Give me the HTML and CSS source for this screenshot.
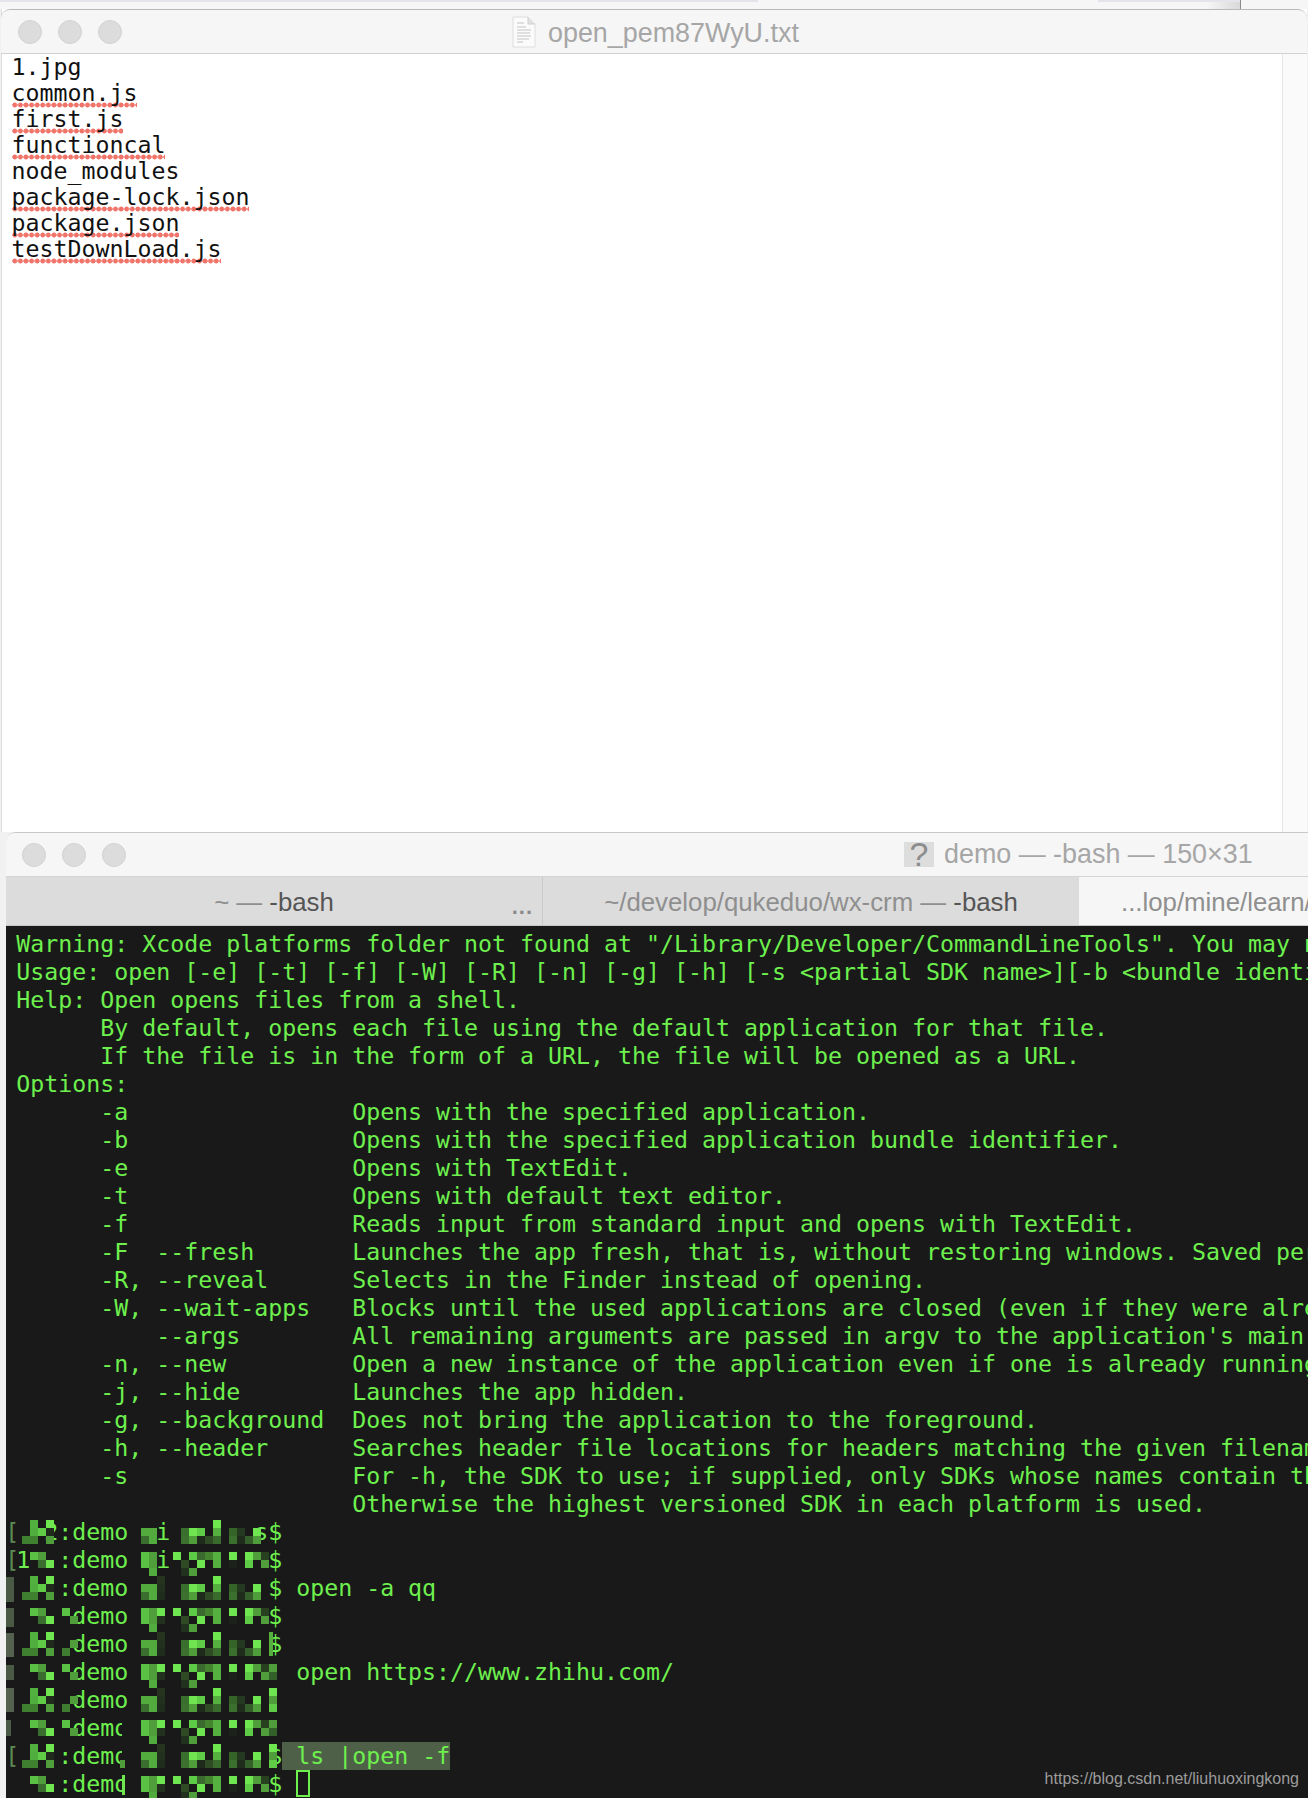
FILE: index.html
```html
<!DOCTYPE html>
<html lang="en">
<head>
<meta charset="utf-8">
<title>open -f</title>
<link rel="stylesheet" href="styles.css">
</head>
<body>
<div class="desktop">
  <div class="backstrip">
    <div class="back-tab-a"></div>
    <div class="back-gap"></div>
    <div class="back-tab-b"></div>
    <div class="back-rest"></div>
  </div>

  <section class="editor">
    <header class="titlebar editor-bar">
      <div class="lights"><i></i><i></i><i></i></div>
      <div class="title">
        <svg class="doc-icon" viewBox="0 0 24 32" width="24" height="32" aria-hidden="true">
          <path d="M1 1h15l7 7v23H1z" fill="#fbfbfb" stroke="#dedede"/>
          <path d="M16 1v7h7" fill="#e2e2e2" stroke="#cfcfcf"/>
          <path d="M5 7h7M5 11h9M5 14h14M5 17h13M5 20h14M5 23h12M5 26h6" stroke="#c4c4c4" stroke-width="1"/>
        </svg>
        <span class="title-text">open_pem87WyU.txt</span>
      </div>
    </header>
    <div class="editor-body">
<pre class="doc">1.jpg
<span class="err">common.js</span>
<span class="err">first.js</span>
<span class="err">functioncal</span>
node_modules
<span class="err">package-lock.json</span>
<span class="err">package.json</span>
<span class="err">testDownLoad.js</span></pre>
      <div class="scroll-gutter"></div>
    </div>
  </section>

  <section class="terminal">
    <header class="titlebar term-bar">
      <div class="lights"><i></i><i></i><i></i></div>
      <div class="title term-title">
        <span class="q-icon">?</span>
        <span>demo — -bash — 150×31</span>
      </div>
    </header>
    <nav class="tabs">
      <div class="tab tab-one"><span class="dim">~ — </span><span class="proc">-bash</span><span class="tab-more">...</span></div>
      <div class="tab tab-two"><span class="dim">~/develop/qukeduo/wx-crm — </span><span class="proc">-bash</span></div>
      <div class="tab tab-active"><span class="dim">...lop/mine/learn/</span></div>
    </nav>
    <div class="term-body">
<pre class="term-text">Warning: Xcode platforms folder not found at "/Library/Developer/CommandLineTools". You may n
Usage: open [-e] [-t] [-f] [-W] [-R] [-n] [-g] [-h] [-s &lt;partial SDK name&gt;][-b &lt;bundle identi
Help: Open opens files from a shell.
      By default, opens each file using the default application for that file.
      If the file is in the form of a URL, the file will be opened as a URL.
Options:
      -a                Opens with the specified application.
      -b                Opens with the specified application bundle identifier.
      -e                Opens with TextEdit.
      -t                Opens with default text editor.
      -f                Reads input from standard input and opens with TextEdit.
      -F  --fresh       Launches the app fresh, that is, without restoring windows. Saved per
      -R, --reveal      Selects in the Finder instead of opening.
      -W, --wait-apps   Blocks until the used applications are closed (even if they were alre
          --args        All remaining arguments are passed in argv to the application's main(
      -n, --new         Open a new instance of the application even if one is already running
      -j, --hide        Launches the app hidden.
      -g, --background  Does not bring the application to the foreground.
      -h, --header      Searches header file locations for headers matching the given filenam
      -s                For -h, the SDK to use; if supplied, only SDKs whose names contain th
                        Otherwise the highest versioned SDK in each platform is used.
<span class="brk">[</span>  2:demo  i      s$
<span class="brk">[</span>1  :demo  i       $
   :demo          $ open -a qq
    demo          $
    demo          $
    demo            open https://www.zhihu.com/
    demo
    demo
<span class="brk">[</span>   :demo          $<span class="sel"> ls |open -f</span>
   :demo          $ <span class="cursor"></span></pre>

      <svg class="mosaic" viewBox="6 1516 300 282" width="300" height="282" aria-hidden="true">
        <defs>
          <g id="aL">
            <rect x="30" y="0" width="8" height="8" fill="#52b03f"/><rect x="46" y="0" width="8" height="8" fill="#6fe650"/>
            <rect x="30" y="8" width="8" height="8" fill="#4fae3d"/><rect x="38" y="8" width="8" height="8" fill="#5fcb47"/><rect x="46" y="8" width="8" height="8" fill="#1f2a1c"/>
            <rect x="22" y="16" width="8" height="8" fill="#3f8030"/><rect x="30" y="16" width="8" height="8" fill="#3f8030"/><rect x="46" y="16" width="8" height="8" fill="#4f9d3b"/>
          </g>
          <g id="aX">
            <rect x="70" y="8" width="8" height="8" fill="#4f9d3b"/><rect x="62" y="16" width="8" height="8" fill="#3e7d30"/>
          </g>
          <g id="aM">
            <rect x="141" y="8" width="8" height="8" fill="#53ab3e"/><rect x="149" y="8" width="8" height="8" fill="#53ab3e"/>
            <rect x="141" y="16" width="8" height="8" fill="#3a6e2e"/><rect x="149" y="16" width="8" height="8" fill="#52ab3e"/>
          </g>
          <g id="aD">
            <rect x="157" y="0" width="8" height="8" fill="#26331f"/><rect x="157" y="8" width="8" height="8" fill="#22301e"/><rect x="157" y="16" width="8" height="8" fill="#1f2e1c"/>
          </g>
          <g id="aR">
            <rect x="213" y="0" width="8" height="8" fill="#6fe84f"/>
            <rect x="181" y="8" width="8" height="8" fill="#3a6e2e"/><rect x="189" y="8" width="8" height="8" fill="#6fe650"/><rect x="197" y="8" width="8" height="8" fill="#5ecc47"/><rect x="213" y="8" width="8" height="8" fill="#55b040"/>
            <rect x="229" y="8" width="8" height="8" fill="#356428"/><rect x="237" y="8" width="8" height="8" fill="#24391f"/><rect x="253" y="8" width="8" height="8" fill="#6fe650"/>
            <rect x="181" y="16" width="8" height="8" fill="#3b702f"/><rect x="189" y="16" width="8" height="8" fill="#4f9d3b"/><rect x="197" y="16" width="8" height="8" fill="#1e2a1b"/><rect x="205" y="16" width="8" height="8" fill="#2e4b25"/><rect x="213" y="16" width="8" height="8" fill="#396b2d"/>
            <rect x="229" y="16" width="8" height="8" fill="#3a6f2e"/><rect x="237" y="16" width="8" height="8" fill="#1f2c1c"/><rect x="245" y="16" width="8" height="8" fill="#355f2a"/><rect x="253" y="16" width="8" height="8" fill="#4f9d3b"/>
          </g>
          <g id="aE">
            <rect x="269" y="0" width="8" height="8" fill="#6fe650"/><rect x="269" y="8" width="8" height="8" fill="#4f9d3b"/><rect x="269" y="16" width="8" height="8" fill="#5fcb47"/>
          </g>
          <g id="bL">
            <rect x="30" y="0" width="8" height="8" fill="#5ac145"/><rect x="38" y="0" width="8" height="8" fill="#4f9d3b"/>
            <rect x="38" y="8" width="8" height="8" fill="#3a6e2e"/><rect x="46" y="8" width="8" height="8" fill="#6fe650"/>
          </g>
          <g id="bX">
            <rect x="62" y="0" width="8" height="8" fill="#5ac145"/><rect x="70" y="8" width="8" height="8" fill="#4f9d3b"/>
          </g>
          <g id="bM">
            <rect x="141" y="0" width="8" height="8" fill="#5ac145"/><rect x="149" y="0" width="8" height="8" fill="#4f9d3b"/>
            <rect x="141" y="8" width="8" height="8" fill="#5ac145"/><rect x="149" y="8" width="8" height="8" fill="#4f9d3b"/>
            <rect x="149" y="16" width="8" height="8" fill="#52ab3e"/>
          </g>
          <g id="bD">
            <rect x="157" y="0" width="8" height="8" fill="#6fe650"/><rect x="157" y="8" width="8" height="8" fill="#22301e"/>
          </g>
          <g id="bR">
            <rect x="173" y="0" width="8" height="8" fill="#6fe650"/><rect x="189" y="0" width="8" height="8" fill="#5ecb46"/><rect x="197" y="0" width="8" height="8" fill="#3a6a2d"/><rect x="205" y="0" width="8" height="8" fill="#44842f"/><rect x="213" y="0" width="8" height="8" fill="#55b040"/>
            <rect x="229" y="0" width="8" height="8" fill="#6fe650"/><rect x="245" y="0" width="8" height="8" fill="#6fe650"/><rect x="253" y="0" width="8" height="8" fill="#4f9d3b"/><rect x="261" y="0" width="8" height="8" fill="#27401f"/>
            <rect x="181" y="8" width="8" height="8" fill="#2e4b25"/><rect x="197" y="8" width="8" height="8" fill="#6fe650"/><rect x="213" y="8" width="8" height="8" fill="#55b040"/>
            <rect x="229" y="8" width="8" height="8" fill="#1b221a"/><rect x="245" y="8" width="8" height="8" fill="#5ecb46"/><rect x="261" y="8" width="8" height="8" fill="#4f9d3b"/>
            <rect x="181" y="16" width="8" height="8" fill="#22301e"/><rect x="189" y="16" width="8" height="8" fill="#4f9d3b"/>
          </g>
          <g id="bE">
            <rect x="269" y="0" width="8" height="8" fill="#4f9d3b"/><rect x="269" y="8" width="8" height="8" fill="#326028"/>
          </g>
        </defs>

        <!-- prompt rows: odd rows carry pattern A, even rows pattern B -->
        <g transform="translate(0 1520)"><use href="#aL"/><use href="#aM"/><use href="#aR"/></g>
        <g transform="translate(0 1552)"><use href="#bL"/><use href="#bM"/><use href="#bR"/></g>
        <g transform="translate(0 1576)"><use href="#aL"/><use href="#aM"/><use href="#aD"/><use href="#aR"/></g>
        <g transform="translate(0 1608)"><use href="#bL"/><use href="#bX"/><use href="#bM"/><use href="#bD"/><use href="#bR"/></g>
        <g transform="translate(0 1632)"><use href="#aL"/><use href="#aX"/><use href="#aM"/><use href="#aD"/><use href="#aR"/></g>
        <g transform="translate(0 1664)"><use href="#bL"/><use href="#bX"/><use href="#bM"/><use href="#bD"/><use href="#bR"/><use href="#bE"/></g>
        <g transform="translate(0 1688)"><use href="#aL"/><use href="#aX"/><use href="#aM"/><use href="#aD"/><use href="#aR"/><use href="#aE"/></g>
        <g transform="translate(0 1720)"><use href="#bL"/><use href="#bX"/><use href="#bM"/><use href="#bD"/><use href="#bR"/><use href="#bE"/></g>
        <g transform="translate(0 1744)"><use href="#aL"/><use href="#aM"/><use href="#aD"/><use href="#aR"/><use href="#aE"/></g>
        <g transform="translate(0 1776)"><use href="#bL"/><use href="#bM"/><use href="#bD"/><use href="#bR"/></g>

        <rect x="269" y="1632" width="4" height="24" fill="#55b040"/>

        <!-- edge of the mask: cut letters and the grey-green smear on the left -->
        <rect x="122" y="1720" width="8" height="22" fill="#191919"/>
        <rect x="122" y="1748" width="8" height="22" fill="#191919"/>
        <rect x="120" y="1760" width="5" height="8" fill="#4f9d3b"/>
        <rect x="125" y="1776" width="5" height="20" fill="#191919"/>
        <rect x="122" y="1775" width="3" height="20" fill="#6fe650"/>
        <rect x="6" y="1577" width="8" height="25" fill="#4a5a45"/>
        <rect x="6" y="1608" width="8" height="19" fill="#4a5a45"/>
        <rect x="6" y="1633" width="8" height="24" fill="#53614e"/>
        <rect x="6" y="1665" width="8" height="15" fill="#4a5a45"/>
        <rect x="6" y="1688" width="8" height="24" fill="#53614e"/>
        <rect x="6" y="1720" width="5" height="16" fill="#4a5a45"/>
      </svg>

      <div class="watermark">https://blog.csdn.net/liuhuoxingkong</div>
    </div>
  </section>
</div>
</body>
</html>
```

FILE: styles.css
```css
* { box-sizing: border-box; }

html, body {
  margin: 0;
  padding: 0;
  width: 1308px;
  height: 1798px;
  overflow: hidden;
  background: #f1f1f1;
}

.desktop {
  width: 1308px;
  height: 1798px;
  display: flex;
  flex-direction: column;
  overflow: hidden;
  font-family: "Liberation Sans", Arial, sans-serif;
}

/* strip of the window behind, above the editor */
.backstrip {
  height: 9px;
  flex: none;
  display: flex;
  background: #f6f6f6;
}
.back-tab-a { width: 758px; height: 2px; background: #e4e4ea; }
.back-gap { width: 340px; }
.back-tab-b {
  width: 143px;
  background: linear-gradient(#e4e4ea 2px, transparent 2px),
              linear-gradient(90deg, #f6f6f6 76%, #d9d9d9 100%);
  border-right: 1px solid #8b8b8b;
}
.back-rest { flex: 1; }

/* shared window parts */
.titlebar {
  display: flex;
  align-items: center;
  background: #f6f6f6;
}
.lights { display: flex; gap: 16px; flex: none; }
.lights i {
  display: block;
  width: 24px;
  height: 24px;
  border-radius: 50%;
  background: #dcdcdc;
  border: 1px solid #d2d2d2;
}
.title {
  display: flex;
  align-items: center;
  color: #a6a6a6;
  font-size: 26.9px;
  white-space: nowrap;
}
.title-text { padding-top: 3px; }

/* text editor window */
.editor {
  height: 823px;
  flex: none;
  margin-left: 1px;
  margin-right: 1px;
  display: flex;
  flex-direction: column;
  background: #fff;
  border-left: 1px solid #dcdcdc;
}
.editor-bar {
  height: 45px;
  flex: none;
  margin-left: -1px;
  padding-left: 17px;
  border-top: 1px solid #b9b9b9;
  border-bottom: 1px solid #d2d2d2;
  border-radius: 9px 9px 0 0;
}
.editor-bar .title { margin-left: 390px; gap: 12px; }
.doc-icon { flex: none; }
.editor-body { flex: 1; display: flex; min-height: 0; }
.doc {
  flex: 1;
  margin: 0;
  padding: 0 0 0 9.5px;
  font-family: "DejaVu Sans Mono", "Liberation Mono", monospace;
  font-size: 23.25px;
  line-height: 26px;
  color: #111;
}
.err {
  background-image: radial-gradient(circle at center, #f07469 2.2px, rgba(240, 116, 105, 0) 2.8px);
  background-size: 5.6px 6px;
  background-repeat: repeat-x;
  background-position: left bottom;
  padding-bottom: 2px;
}
.scroll-gutter {
  width: 25px;
  flex: none;
  background: #fafafa;
  border-left: 1px solid #e6e6e6;
}

/* terminal window */
.terminal {
  flex: 1;
  min-height: 0;
  margin-left: 6px;
  display: flex;
  flex-direction: column;
  overflow: hidden;
  border-radius: 9px 0 0 0;
}
.term-bar {
  height: 45px;
  flex: none;
  padding-left: 16px;
  border-top: 1px solid #c8c8c8;
  border-bottom: 1px solid #d4d4d4;
  border-radius: 9px 0 0 0;
}
.term-title { margin-left: 778px; gap: 10px; }
.q-icon {
  width: 30px;
  height: 25px;
  flex: none;
  text-align: center;
  line-height: 25px;
  font-size: 34px;
  color: #8c8c8c;
  background: #dddddd;
}
.tabs {
  height: 49px;
  flex: none;
  display: flex;
  background: #dcdcdc;
  border-bottom: 1px solid #c6c6c6;
  font-size: 25.8px;
  white-space: nowrap;
}
.tab {
  position: relative;
  display: flex;
  align-items: center;
  justify-content: center;
  flex: none;
  padding-top: 2px;
}
.tab-one { width: 537px; border-right: 1px solid #cacaca; }
.tab-two { width: 536px; }
.tab-active {
  flex: 1;
  justify-content: flex-start;
  padding-left: 42px;
  background: #f6f6f6;
  overflow: hidden;
}
.dim { color: #8f8f8f; white-space: pre; }
.proc { color: #555; }
.tab-more {
  position: absolute;
  right: 9px;
  bottom: 5px;
  font-size: 22px;
  font-weight: bold;
  letter-spacing: 1px;
  color: #8a8a8a;
}
.term-body {
  flex: 1;
  min-height: 0;
  position: relative;
  background: #191919;
  overflow: hidden;
}
.term-text {
  margin: 0;
  padding: 4px 0 0 10.2px;
  font-family: "DejaVu Sans Mono", "Liberation Mono", monospace;
  font-size: 23.25px;
  line-height: 28px;
  color: #6ef04e;
  white-space: pre;
}
.brk { margin: 0 -3px 0 -11px; color: #5d8a53; }
.sel {
  display: inline-block;
  height: 28px;
  line-height: 28px;
  vertical-align: top;
  background: #4f6048;
}
.cursor {
  display: inline-block;
  width: 14px;
  height: 27px;
  vertical-align: top;
  border: 2px solid #6ef04e;
}
.mosaic {
  position: absolute;
  left: 0;
  top: 590px;
}
.watermark {
  position: absolute;
  right: 9px;
  bottom: 10px;
  font-size: 16px;
  color: #9c9c9c;
}
```
